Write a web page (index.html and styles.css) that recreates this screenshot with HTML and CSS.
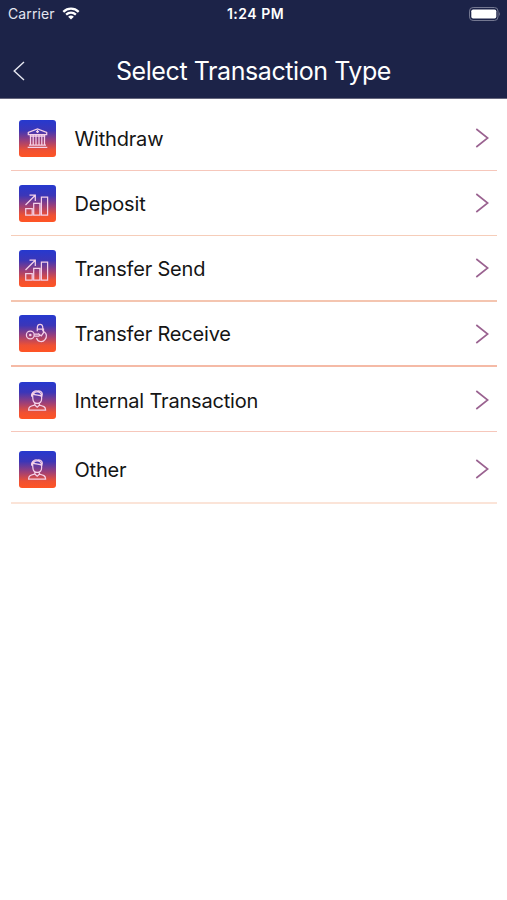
FILE: index.html
```html
<!DOCTYPE html>
<html lang="en">
<head>
<meta charset="utf-8">
<title>Select Transaction Type</title>
<link rel="stylesheet" href="styles.css">
</head>
<body>
<svg class="defs" aria-hidden="true">
  <defs>
    <symbol id="bank" viewBox="0 0 37 37">
      <path d="M9.3 14.7v-2.3l9.2-3.6 9.2 3.6v2.3zM11.5 15v9.6M14.2 15v9.6M17 15v9.6M20 15v9.6M22.8 15v9.6M25.5 15v9.6M10 25h17M8.7 27.3h19.6M18.5 10v3M17 11.6h3M10.7 16.2h15.6"/>
    </symbol>
    <symbol id="chart" viewBox="0 0 37 37">
      <path d="M6.7 23.5h6.5v6.6H6.7zM14.7 18.3h6.2v11.8h-6.2zM22.4 12h6.2v18.1h-6.2zM6.5 20L16 10.5M10.5 10.2h5.8V16"/>
    </symbol>
    <symbol id="receive" viewBox="0 0 37 37">
      <circle cx="11.3" cy="20" r="3.9"/><circle class="dot" cx="11.3" cy="20" r="1.3"/>
      <path d="M15.2 19h4.6q1.5 1 0 2.2h-4.6M17.5 23c1.2 4.2 6.2 4.6 8.5 1.6 2-2.6 1.7-5.7-.8-7.8M18.3 16.2v-3c0-5 5.5-5 5.5 0v3M18.1 14.2h6.4v3.5l-2.2 3.2-3.3-2.5"/>
    </symbol>
    <symbol id="person" viewBox="0 0 37 37">
      <path d="M13.7 15c-1-6.5 9.7-7 8.9 0v2c-.2 5.8-8.4 5.8-8.7 0zM13 14.8c-1.5-3.4 2-6.6 5.3-5.7 4.3-.8 6.1 2.4 4.5 5.7-1.3-3-6.3-.5-9.1-3.1M15.8 20.8V23c-4.3 1.2-6.2 1.6-6.2 5h17c0-3.4-2.4-4-6.2-5v-2.2M15.8 23l2.4 2.2 2.4-2.2"/>
    </symbol>
    <symbol id="chevron" viewBox="0 0 14 20"><path d="M1.3 1L12.7 10 1.3 19"/></symbol>
  </defs>
</svg>
<header class="header">
  <div class="status">
    <div class="carrier"><span>Carrier</span>
      <svg class="wifi" viewBox="0 0 18 13"><path d="M1.3 4.8c4.5-4.2 10.9-4.2 15.4 0M4.1 7.7c2.9-2.6 6.9-2.6 9.8 0"/><path class="solid" d="M6.1 9.7q2.9-2.4 5.8 0L9 12.6z"/></svg>
    </div>
    <div class="time">1:24 PM</div>
    <svg class="battery" viewBox="0 0 32 14"><rect class="case" x=".5" y=".5" width="28.5" height="13" rx="3.6"/><rect class="charge" x="2.3" y="2.5" width="25" height="9" rx="1.8"/><path class="cap" d="M30.2 4.8q1.8 2.2 0 4.4z"/></svg>
  </div>
  <div class="nav">
    <svg class="back" viewBox="0 0 12 20"><path d="M11 1L1.2 10 11 19"/></svg>
    <h1>Select Transaction Type</h1>
  </div>
</header>
<main class="list">
  <div class="row"><svg class="icon"><use href="#bank"/></svg><span class="label">Withdraw</span><svg class="chevron"><use href="#chevron"/></svg></div>
  <div class="row peach"><svg class="icon"><use href="#chart"/></svg><span class="label">Deposit</span><svg class="chevron"><use href="#chevron"/></svg></div>
  <div class="row thick"><svg class="icon"><use href="#chart"/></svg><span class="label">Transfer Send</span><svg class="chevron"><use href="#chevron"/></svg></div>
  <div class="row strong"><svg class="icon"><use href="#receive"/></svg><span class="label">Transfer Receive</span><svg class="chevron"><use href="#chevron"/></svg></div>
  <div class="row internal"><svg class="icon"><use href="#person"/></svg><span class="label">Internal Transaction</span><svg class="chevron"><use href="#chevron"/></svg></div>
  <div class="row last"><svg class="icon"><use href="#person"/></svg><span class="label">Other</span><svg class="chevron"><use href="#chevron"/></svg></div>
</main>
</body>
</html>
```
FILE: styles.css
```css
* { box-sizing: border-box; }
body { margin: 0; background: #fff; color: #151515; font-family: Inter, "Liberation Sans", sans-serif; }
svg { display: block; fill: none; flex: none; }
.defs { position: absolute; width: 0; height: 0; }
.header { height: 99px; background: #1c2348; border-bottom: 1px solid #65667c; color: #fff; }
.status { height: 27px; padding: 0 6px 0 8px; display: grid; grid-template-columns: 1fr auto 1fr; align-items: center; font-size: 14px; }
.carrier { display: flex; align-items: center; gap: 7px; color: #e4e6f1; letter-spacing: .1px; }
.wifi { width: 18px; height: 13px; stroke: #fff; stroke-width: 2.3; }
.wifi .solid { fill: #fff; stroke: none; }
.time { padding-left: 2px; font-weight: 600; font-size: 14px; letter-spacing: .5px; }
.battery { width: 32px; height: 14px; justify-self: end; }
.case { stroke: #747891; }
.charge { fill: #fff; }
.cap { fill: #777b94; }
.nav { height: 71px; padding: 16px 13px 0; display: grid; grid-template-columns: 12px 1fr 12px; align-items: center; }
.back { width: 12px; height: 20px; stroke: #e7e9f2; stroke-width: 1.4; }
h1 { margin: 0; text-align: center; font-weight: 400; font-size: 25px; line-height: 30px; letter-spacing: -.42px; white-space: nowrap; }
.list { padding: 7px 10px 0 11px; }
.row { height: 65px; padding: 0 8px; border-bottom: 1px solid #f6c7bb; display: flex; align-items: center; }
.icon { width: 37px; height: 37px; border-radius: 3px; background: linear-gradient(#2639cf 0%, #3b36b8 28%, #9b3f79 56%, #ef5133 82%, #ff5424 100%); stroke: #f4d0e8; stroke-width: 1.25; }
.dot { fill: #f4d0e8; stroke: none; }
.label { flex: 1; margin-left: 18.5px; padding-top: 1px; font-size: 20px; line-height: 26px; letter-spacing: -.18px; white-space: nowrap; }
.chevron { width: 14px; height: 20px; stroke: #9a6290; stroke-width: 1.6; }
.peach { border-color: #f6cdb9; }
.thick { height: 66px; border-bottom: 2px solid #f4c5b0; }
.strong { border-bottom: 2px solid #f5baa6; }
.internal { padding-top: 2px; }
.last { height: 72px; padding-top: 4px; border-bottom: 2px solid #fbe4d8; }
```
